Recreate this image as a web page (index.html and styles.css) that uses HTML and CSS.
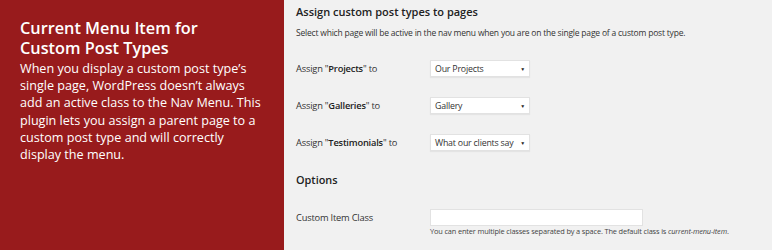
FILE: index.html
```html
<!DOCTYPE html>
<html lang="en">
<head>
    <meta charset="UTF-8">
    <title>Current Menu Item for Custom Post Types</title>
    <link rel="stylesheet" href="styles.css">
</head>
<body>
    <div class="banner">
        <div class="intro">
            <h1>Current Menu Item for Custom Post Types</h1>
            <p>When you display a custom post type’s single page, WordPress doesn’t always add an active class to the Nav Menu. This plugin lets you assign a parent page to a custom post type and will correctly display the menu.</p>
        </div>
        <div class="settings">
            <h2>Assign custom post types to pages</h2>
            <p class="desc">Select which page will be active in the nav menu when you are on the single page of a custom post type.</p>
            <div class="rows">
                <div class="row">
                    <label>Assign "<b>Projects</b>" to</label>
                    <div class="select"><span>Our Projects</span><i>▼</i></div>
                </div>
                <div class="row">
                    <label>Assign "<b>Galleries</b>" to</label>
                    <div class="select"><span>Gallery</span><i>▼</i></div>
                </div>
                <div class="row">
                    <label>Assign "<b>Testimonials</b>" to</label>
                    <div class="select"><span>What our clients say</span><i>▼</i></div>
                </div>
            </div>
            <h3>Options</h3>
            <div class="row option">
                <label>Custom Item Class</label>
                <div class="field">
                    <div class="input"></div>
                    <p class="hint">You can enter multiple classes separated by a space. The default class is <em>current-menu-item</em>.</p>
                </div>
            </div>
        </div>
    </div>
</body>
</html>
```

FILE: styles.css
```css
body {
    margin: 0;
    font-family: 'Open Sans', sans-serif;
    background: #f1f1f1;
}
.banner {
    display: flex;
    width: 772px;
    height: 250px;
    overflow: hidden;
}
.intro {
    width: 284px;
    flex-shrink: 0;
    background: #981b1c;
    color: #fff;
    padding: 18px 20px 0 20px;
    box-sizing: border-box;
}
.intro h1 {
    margin: 0;
    font-size: 16.3px;
    font-weight: 600;
    line-height: 20px;
    width: 200px;
}
.intro p {
    margin: 2px 0 0;
    font-size: 12.6px;
    line-height: 17.2px;
}
.settings {
    flex: 1;
    padding: 3px 0 0 12px;
    color: #222;
}
.settings h2 {
    margin: 0;
    font-size: 11px;
    font-weight: 600;
    line-height: 18px;
}
.desc {
    margin: 5px 0 0;
    font-size: 8.5px;
    letter-spacing: -0.2px;
    color: #333;
    line-height: 14px;
}
.rows {
    margin-top: 20px;
    display: flex;
    flex-direction: column;
    gap: 20px;
}
.row {
    display: flex;
    align-items: flex-start;
}
.row label {
    width: 134px;
    font-size: 9.3px;
    letter-spacing: -0.2px;
    line-height: 17px;
    color: #333;
}
.row label b {
    font-weight: 600;
    color: #222;
}
.select {
    width: 100px;
    height: 17px;
    box-sizing: border-box;
    background: #fff;
    border: 1px solid #e2e2e2;
    box-shadow: 0 1px 1px rgba(0, 0, 0, 0.05);
    display: flex;
    align-items: center;
    justify-content: space-between;
    padding: 0 4px 0 4px;
    font-size: 8.8px;
    letter-spacing: -0.2px;
    color: #333;
    white-space: nowrap;
}
.select i {
    font-style: normal;
    font-size: 5px;
    color: #222;
}
.settings h3 {
    margin: 20px 0 0;
    font-size: 10.9px;
    font-weight: 600;
    line-height: 18px;
}
.option {
    margin-top: 20px;
}
.field {
    display: flex;
    flex-direction: column;
}
.input {
    width: 213px;
    height: 17px;
    box-sizing: border-box;
    background: #fff;
    border: 1px solid #e2e2e2;
}
.hint {
    margin: 0;
    font-size: 7.4px;
    letter-spacing: -0.15px;
    color: #444;
    line-height: 11px;
    white-space: nowrap;
}
```
